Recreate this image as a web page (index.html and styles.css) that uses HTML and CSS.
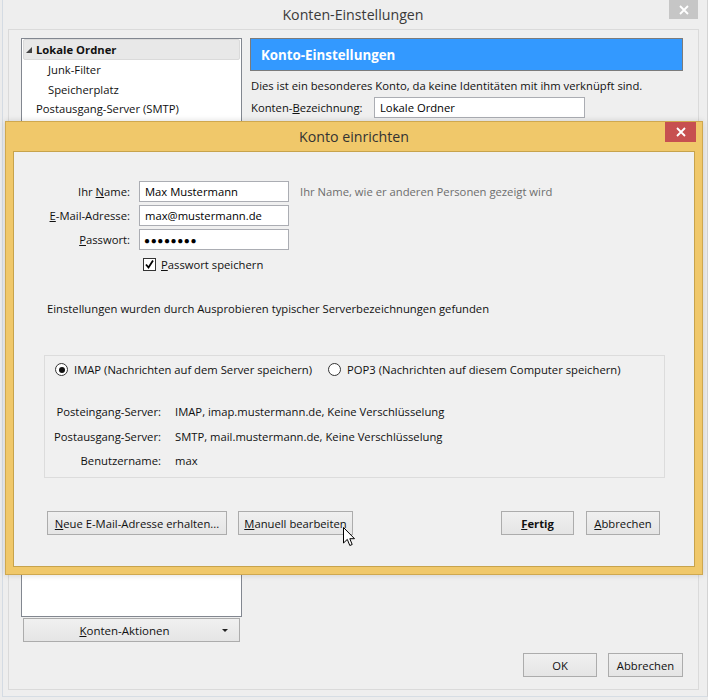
FILE: index.html
```html
<!DOCTYPE html>
<html lang="de">
<head>
<meta charset="utf-8">
<title>Konten-Einstellungen</title>
<link rel="stylesheet" href="styles.css">
</head>
<body>
<div class="window">
  <div class="titlebar">
    <span class="title">Konten-Einstellungen</span>
    <span class="close close-gray"><svg width="10" height="10" viewBox="0 0 10 10"><path d="M1 1L9 9M9 1L1 9" stroke="#fff" stroke-width="1.8"/></svg></span>
  </div>
  <div class="panel">
    <div class="leftcol">
      <div class="tree">
        <div class="row sel"><span class="twisty"></span><b>Lokale Ordner</b></div>
        <div class="row child">Junk-Filter</div>
        <div class="row child">Speicherplatz</div>
        <div class="row">Postausgang-Server (SMTP)</div>
      </div>
      <div class="btn actions"><span><u>K</u>onten-Aktionen</span><span class="arrow"></span></div>
    </div>
    <div class="rightcol">
      <div class="header">Konto-Einstellungen</div>
      <p class="info">Dies ist ein besonderes Konto, da keine Identitäten mit ihm verknüpft sind.</p>
      <div class="namerow"><span class="nlbl">Konten-<u>B</u>ezeichnung:</span><div class="field wide">Lokale Ordner</div></div>
      <div class="footer">
        <div class="btn ok">OK</div>
        <div class="btn cancel">Abbrechen</div>
      </div>
    </div>
  </div>

  <div class="dialog">
    <div class="dtitle">
      <span class="title">Konto einrichten</span>
      <span class="close close-red"><svg width="10" height="10" viewBox="0 0 10 10"><path d="M1 1L9 9M9 1L1 9" stroke="#fff" stroke-width="1.8"/></svg></span>
    </div>
    <div class="dcontent">
      <div class="form">
        <span class="lbl">Ihr <u>N</u>ame:</span><div class="field">Max Mustermann</div><span class="hint">Ihr Name, wie er anderen Personen gezeigt wird</span>
        <span class="lbl"><u>E</u>-Mail-Adresse:</span><div class="field">max@mustermann.de</div><span></span>
        <span class="lbl"><u>P</u>asswort:</span><div class="field dots">●●●●●●●●</div><span></span>
        <span></span><div class="check"><span class="cbox"><svg width="11" height="11" viewBox="0 0 11 11"><path d="M2 5.5L4.5 8.5L9 1.5" fill="none" stroke="#000" stroke-width="1.8"/></svg></span><span><u>P</u>asswort speichern</span></div><span></span>
      </div>
      <p class="found">Einstellungen wurden durch Ausprobieren typischer Serverbezeichnungen gefunden</p>
      <div class="group">
        <div class="radios">
          <span class="radio on"></span><span class="rlabel">IMAP (Nachrichten auf dem Server speichern)</span>
          <span class="radio"></span><span class="rlabel">POP3 (Nachrichten auf diesem Computer speichern)</span>
        </div>
        <div class="servers">
          <span class="slbl">Posteingang-Server:</span><span>IMAP, imap.mustermann.de, Keine Verschlüsselung</span>
          <span class="slbl">Postausgang-Server:</span><span>SMTP, mail.mustermann.de, Keine Verschlüsselung</span>
          <span class="slbl">Benutzername:</span><span>max</span>
        </div>
      </div>
      <div class="dbuttons">
        <div class="btn b-new"><span><u>N</u>eue E-Mail-Adresse erhalten...</span></div>
        <div class="btn b-man"><span><u>M</u>anuell bearbeiten</span></div>
        <div class="spacer"></div>
        <div class="btn b-done"><b><u>F</u>ertig</b></div>
        <div class="btn b-cancel"><span><u>A</u>bbrechen</span></div>
      </div>
    </div>
  </div>

  <svg class="cursor" width="13" height="20" viewBox="0 0 13 20"><path d="M0.5 0.5L0.5 16L4.3 12.4L6.8 18.5L9.2 17.5L6.8 11.7L11.5 11.7Z" fill="#fff" stroke="#000" stroke-width="1"/></svg>
</div>
</body>
</html>
```

FILE: styles.css
```css
* { box-sizing: border-box; }
html, body {
  margin: 0;
  padding: 0;
  width: 708px;
  height: 700px;
  overflow: hidden;
  background: #ececec;
}
body {
  font-family: "Open Sans", "Noto Sans", sans-serif;
  font-size: 11.25px;
  color: #111;
}
u { text-decoration: underline; text-underline-offset: 1px; }

.window {
  position: relative;
  width: 706px;
  height: 697px;
  margin-left: 2px;
  border-left: 1px solid #d4dbe3;
  border-right: 1px solid #d3d3d3;
  border-bottom: 1px solid #d6dde4;
  background: #eeeeee;
}

.titlebar {
  height: 29px;
  position: relative;
  display: flex;
  justify-content: center;
  align-items: center;
}
.title {
  font-size: 14.2px;
  color: #3a3a3a;
  padding-right: 4px;
}
.close {
  position: absolute;
  display: flex;
  align-items: center;
  justify-content: center;
}
.close-gray {
  top: 0;
  right: 9px;
  width: 29px;
  height: 19px;
  background: #c6c6c6;
}

.panel {
  margin-left: 5px;
  width: 691px;
  height: 661px;
  border: 1px solid #dadada;
  background: #efefef;
  display: flex;
  padding: 8px 15px 12px 12px;
  gap: 8px;
}
.leftcol {
  width: 221px;
  display: flex;
  flex-direction: column;
  gap: 1px;
}
.tree {
  height: 579px;
  background: #fff;
  border: 1px solid #828790;
  padding: 0 1px;
}
.row {
  height: 19.5px;
  display: flex;
  align-items: center;
  padding-left: 13px;
  white-space: nowrap;
}
.row.sel {
  height: 21px;
  padding-left: 2px;
  background: #e8e8e8;
  border: 1px solid #dadada;
  border-radius: 2px;
}
.row.sel b { font-weight: 700; margin-left: 4px; }
.row.child { padding-left: 25px; }
.twisty {
  width: 0;
  height: 0;
  border-left: 6px solid transparent;
  border-bottom: 6px solid #444;
}

.btn {
  height: 24px;
  border: 1px solid #acacac;
  background: linear-gradient(#f0f0f0, #e5e5e5);
  display: flex;
  align-items: center;
  justify-content: center;
  white-space: nowrap;
  color: #111;
}
.actions {
  margin-left: 2px;
  width: 217px;
  position: relative;
  font-size: 11.5px;
  padding-right: 14px;
}
.arrow {
  position: absolute;
  right: 11px;
  top: 10px;
  width: 0;
  height: 0;
  border-left: 3px solid transparent;
  border-right: 3px solid transparent;
  border-top: 3px solid #222;
}

.rightcol {
  flex: 1;
  display: flex;
  flex-direction: column;
}
.header {
  height: 33px;
  background: #3399ff;
  border: 1px solid #7b7b7b;
  color: #fff;
  font-weight: 700;
  font-size: 13.3px;
  display: flex;
  align-items: center;
  padding-left: 10px;
}
.info {
  margin: 7px 0 0 1px;
  white-space: nowrap;
}
.namerow {
  margin-top: 4px;
  display: flex;
  align-items: center;
  gap: 9px;
  padding-left: 1px;
}
.nlbl { width: 114px; flex: none; white-space: nowrap; }
.field {
  height: 21px;
  background: #fff;
  border: 1px solid #abadb3;
  display: flex;
  align-items: center;
  padding-left: 5px;
  color: #000;
  white-space: nowrap;
}
.field.wide { width: 211px; }
.footer {
  margin-top: auto;
  display: flex;
  justify-content: flex-end;
  gap: 11px;
}
.ok { width: 74px; }
.cancel { width: 75px; }

/* dialog */
.dialog {
  position: absolute;
  left: 2px;
  top: 121px;
  width: 698px;
  height: 454px;
  background: #f0c86a;
  border: 1px solid #cfa84f;
  padding: 0 7px 7px 7px;
  display: flex;
  flex-direction: column;
  box-shadow: 0 0 6px rgba(0,0,0,0.15);
}
.dtitle {
  height: 29px;
  flex: none;
  position: relative;
  display: flex;
  align-items: center;
  justify-content: center;
}
.dtitle .title { padding-right: 0; color: #333; }
.close-red {
  top: 0;
  right: -1px;
  width: 31px;
  height: 20px;
  background: #c75050;
}
.dcontent {
  flex: 1;
  background: #f0f0f0;
  border: 1px solid #c7a34c;
  padding: 29px 34px 0 0;
  display: flex;
  flex-direction: column;
}
.form {
  display: grid;
  grid-template-columns: 116px 150px auto;
  column-gap: 9px;
  row-gap: 3px;
  align-items: center;
}
.lbl { text-align: right; white-space: nowrap; }
.hint { color: #6d6d6d; padding-left: 2px; white-space: nowrap; }
.dots { font-size: 10px; letter-spacing: 0.6px; padding-left: 4px; }
.check {
  margin-top: 4px;
  display: flex;
  align-items: center;
  gap: 5px;
  padding-left: 4px;
  white-space: nowrap;
}
.cbox {
  width: 13px;
  height: 13px;
  border: 1px solid #333;
  background: #fff;
  display: flex;
  align-items: center;
  justify-content: center;
}
.found {
  margin: 29px 0 0 33px;
  white-space: nowrap;
}
.group {
  margin: 39px 0 0 30px;
  width: 621px;
  height: 123px;
  border: 1px solid #dcdcdc;
  padding: 6px 0 0 8px;
}
.radios {
  display: flex;
  align-items: center;
  height: 15px;
  padding-left: 2px;
}
.radio {
  width: 13px;
  height: 13px;
  border-radius: 50%;
  border: 1px solid #333;
  background: #fff;
  position: relative;
  flex: none;
}
.radio.on::after {
  content: "";
  position: absolute;
  left: 2.5px;
  top: 2.5px;
  width: 6px;
  height: 6px;
  border-radius: 50%;
  background: #111;
}
.rlabel { margin-left: 6px; margin-right: 16px; white-space: nowrap; }
.servers {
  margin-top: 26px;
  display: grid;
  grid-template-columns: 108px auto;
  column-gap: 14px;
  row-gap: 7.5px;
  line-height: 17px;
}
.slbl { text-align: right; white-space: nowrap; }
.dbuttons {
  margin: 33px 0 0 33px;
  display: flex;
  gap: 11px;
}
.spacer { flex: 1; }
.b-new { width: 180px; }
.b-man { width: 115px; }
.b-done { width: 73px; margin-right: 1px; }
.b-cancel { width: 74px; }

.cursor {
  position: absolute;
  left: 340px;
  top: 527px;
}
```
